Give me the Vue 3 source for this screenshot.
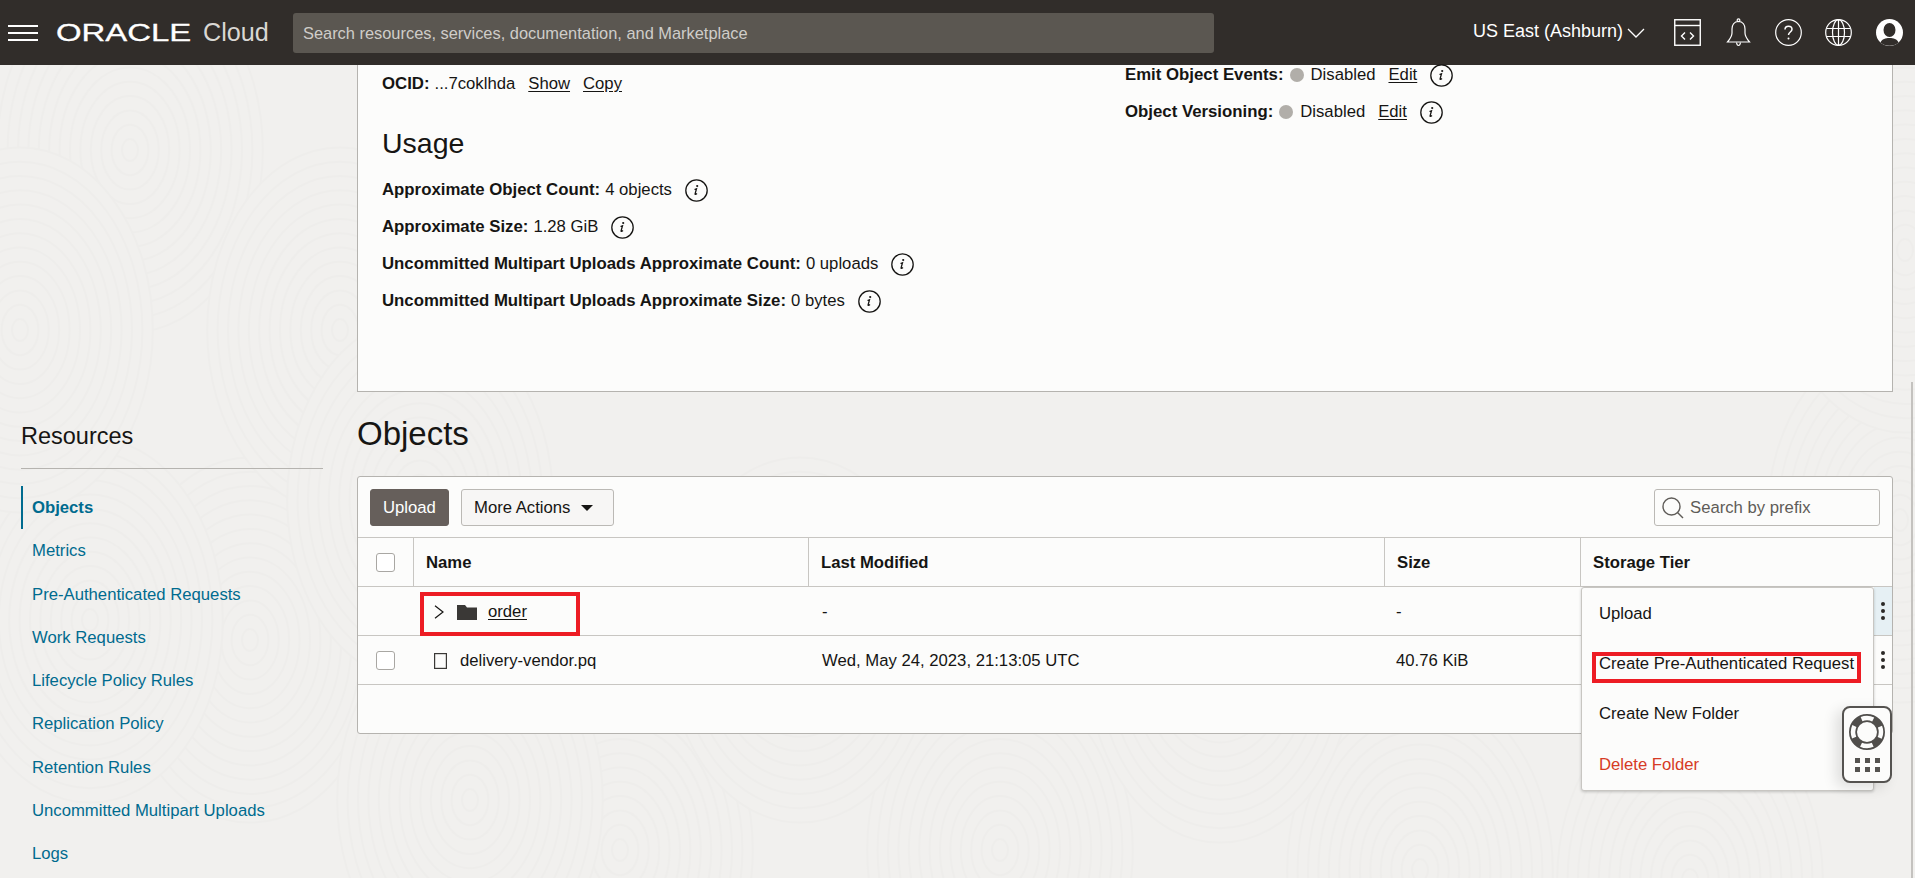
<script setup>
const navItems = [
  "Objects",
  "Metrics",
  "Pre-Authenticated Requests",
  "Work Requests",
  "Lifecycle Policy Rules",
  "Replication Policy",
  "Retention Rules",
  "Uncommitted Multipart Uploads",
  "Logs",
];

const usage = [
  { label: "Approximate Object Count:", value: "4 objects" },
  { label: "Approximate Size:", value: "1.28 GiB" },
  { label: "Uncommitted Multipart Uploads Approximate Count:", value: "0 uploads" },
  { label: "Uncommitted Multipart Uploads Approximate Size:", value: "0 bytes" },
];

const menuItems = [
  { text: "Upload" },
  { text: "Create Pre-Authenticated Request" },
  { text: "Create New Folder" },
  { text: "Delete Folder", danger: true },
];

// faint swirl pattern of the page background
const swirlCenters = [
  [130, 150], [250, 640], [90, 620], [20, 330], [340, 330],
  [620, 850], [1000, 850], [1420, 870], [800, 640], [1220, 660],
  [1690, 880], [1900, 520], [470, 800], [1905, 250], [420, 500],
];
const swirls = swirlCenters.map(([cx, cy]) => ({
  cx,
  cy,
  radii: Array.from({ length: 13 }, (_, i) => 10 + i * 13),
}));
</script>

<template>
  <div class="page">
    <svg class="texture" width="1915" height="813" viewBox="0 65 1915 813">
      <g v-for="(s, i) in swirls" :key="i" fill="#f1f0ee" stroke="#eeedeb" stroke-width="2">
        <ellipse
          v-for="r in [...s.radii].reverse()"
          :key="r"
          :cx="s.cx"
          :cy="s.cy"
          :rx="r * 0.8"
          :ry="r * 1.1"
        />
      </g>
    </svg>

    <header class="topbar">
      <button class="burger" type="button" aria-label="Menu"><i></i><i></i><i></i></button>
      <div class="brand">
        <span class="wordmark">ORACLE</span>
        <span class="cloud">Cloud</span>
      </div>
      <div class="global-search">Search resources, services, documentation, and Marketplace</div>
      <div class="top-right">
        <span class="region">US East (Ashburn)</span>
        <svg class="region-caret" width="18" height="10" viewBox="0 0 18 10">
          <path d="M1 1l8 8 8-8" fill="none" stroke="#fff" stroke-width="1.3" />
        </svg>
        <svg class="ico-code" width="27" height="27" viewBox="0 0 27 27" fill="none" stroke="#fff">
          <rect x=".75" y=".75" width="25.5" height="25.5" stroke-width="1.4" />
          <path d="M1 6.5h25" stroke-width="1.4" />
          <path d="M11 13.5l-3.5 3.5 3.5 3.5M16 13.5l3.5 3.5-3.5 3.5" stroke-width="1.4" />
        </svg>
        <svg class="ico-bell" width="25" height="29" viewBox="0 0 25 29" fill="none" stroke="#fff" stroke-width="1.2">
          <path d="M12.500 3.500c-4.500 0-6.500 3.500-6.500 7.500v4c0 3.500-2 6-4.500 9h22c-2.500-3-4.500-5.500-4.500-9v-4c0-4-2-7.500-6.500-7.500z" />
          <circle cx="12.500" cy="2.300" r="1.400" />
          <path d="M10.500 24.500c.3 2 1 3 2 3s1.700-1 2-3" />
        </svg>
        <svg class="ico-help" width="27" height="27" viewBox="0 0 27 27" fill="none" stroke="#fff" stroke-width="1.2">
          <circle cx="13.500" cy="13.500" r="12.800" />
          <path d="M10 10.500c0-2 1.500-3.300 3.500-3.300s3.500 1.300 3.500 3.100c0 2.700-3.500 2.700-3.500 5.700" stroke-width="1.500" />
          <circle cx="13.500" cy="19.500" r="1" fill="#fff" stroke="none" />
        </svg>
        <svg class="ico-globe" width="27" height="27" viewBox="0 0 27 27" fill="none" stroke="#fff" stroke-width="1.2">
          <circle cx="13.500" cy="13.500" r="12.800" />
          <ellipse cx="13.500" cy="13.500" rx="6" ry="12.800" />
          <path d="M13.500 .7v25.600M1.500 9.500h24M1.500 17.500h24" />
        </svg>
        <svg class="ico-user" width="27" height="27" viewBox="0 0 27 27">
          <circle cx="13.500" cy="13.500" r="13.500" fill="#fff" />
          <ellipse cx="13.500" cy="11" rx="6" ry="7" fill="#312d2a" />
          <path d="M4.500 23.500c1.500-3.500 5-4.500 9-4.500s7.500 1 9 4.500c-2.500 2.200-5.500 3.300-9 3.300s-6.500-1.100-9-3.300z" fill="#312d2a" />
        </svg>
      </div>
    </header>

    <div class="body">
      <aside class="sidebar">
        <h2 class="res-title">Resources</h2>
        <nav class="res-nav">
          <a
            v-for="(item, i) in navItems"
            :key="item"
            class="res-link"
            :class="{ active: i === 0 }"
          >{{ item }}</a>
        </nav>
      </aside>

      <main class="content">
        <section class="details">
          <div class="details-left">
            <p class="line ocid">
              <b>OCID:</b> ...7coklhda
              <a class="lnk first">Show</a>
              <a class="lnk">Copy</a>
            </p>
            <h2 class="usage-title">Usage</h2>
            <p v-for="u in usage" :key="u.label" class="line usage-line">
              <b>{{ u.label }}</b> {{ u.value }}
              <svg class="info" width="23" height="23" viewBox="0 0 23 23">
                <circle cx="11.500" cy="11.500" r="10.700" fill="none" stroke="#161513" stroke-width="1.300" />
                <path d="M9.500 10.500l2-.7-1.400 5c-.2.800.5 1 1.900-.2" fill="none" stroke="#161513" stroke-width="1.300" />
                <circle cx="12.200" cy="7" r="1.100" fill="#161513" />
              </svg>
            </p>
          </div>
          <div class="details-right">
            <p class="line">
              <b>Emit Object Events:</b>
              <span class="dot"></span>Disabled
              <a class="lnk first">Edit</a>
              <svg class="info" width="23" height="23" viewBox="0 0 23 23">
                <circle cx="11.500" cy="11.500" r="10.700" fill="none" stroke="#161513" stroke-width="1.300" />
                <path d="M9.500 10.500l2-.7-1.400 5c-.2.800.5 1 1.900-.2" fill="none" stroke="#161513" stroke-width="1.300" />
                <circle cx="12.200" cy="7" r="1.100" fill="#161513" />
              </svg>
            </p>
            <p class="line versioning">
              <b>Object Versioning:</b>
              <span class="dot"></span>Disabled
              <a class="lnk first">Edit</a>
              <svg class="info" width="23" height="23" viewBox="0 0 23 23">
                <circle cx="11.500" cy="11.500" r="10.700" fill="none" stroke="#161513" stroke-width="1.300" />
                <path d="M9.500 10.500l2-.7-1.400 5c-.2.800.5 1 1.900-.2" fill="none" stroke="#161513" stroke-width="1.300" />
                <circle cx="12.200" cy="7" r="1.100" fill="#161513" />
              </svg>
            </p>
          </div>
        </section>

        <h1 class="objects-title">Objects</h1>

        <section class="objects">
          <div class="toolbar">
            <button class="btn primary" type="button">Upload</button>
            <button class="btn more" type="button">More Actions <span class="caret"></span></button>
            <div class="prefix">
              <svg width="22" height="22" viewBox="0 0 22 22" fill="none" stroke="#5f5c58" stroke-width="1.400">
                <circle cx="9.500" cy="9.500" r="8.500" />
                <path d="M15.500 15.500l5.500 5.500" />
              </svg>
              <span>Search by prefix</span>
            </div>
          </div>

          <div class="row head">
            <div class="cell check"><span class="box"></span></div>
            <div class="cell ruled">Name</div>
            <div class="cell ruled">Last Modified</div>
            <div class="cell ruled">Size</div>
            <div class="cell ruled">Storage Tier</div>
          </div>

          <div class="row">
            <div class="cell check"></div>
            <div class="cell name">
              <svg class="chev" width="10" height="14" viewBox="0 0 10 14">
                <path d="M1 .7L9 7l-8 6.300" fill="none" stroke="#161513" stroke-width="1.200" />
              </svg>
              <svg class="folder" width="20" height="15" viewBox="0 0 20 15">
                <path d="M0 0h8l2 2.500h10V15H0z" fill="#3a3836" />
              </svg>
              <a class="lnk">order</a>
            </div>
            <div class="cell">-</div>
            <div class="cell">-</div>
            <div class="cell"></div>
            <div class="kebab hovered"><i></i><i></i><i></i></div>
          </div>

          <div class="row">
            <div class="cell check"><span class="box"></span></div>
            <div class="cell name">
              <svg class="file" width="13" height="16" viewBox="0 0 13 16">
                <rect x=".6" y=".6" width="11.800" height="14.800" fill="none" stroke="#3a3836" stroke-width="1.200" />
              </svg>
              <span>delivery-vendor.pq</span>
            </div>
            <div class="cell">Wed, May 24, 2023, 21:13:05 UTC</div>
            <div class="cell">40.76 KiB</div>
            <div class="cell"></div>
            <div class="kebab"><i></i><i></i><i></i></div>
          </div>

          <div class="row-empty"></div>

          <span class="mark mark-order"></span>
          <ul class="menu">
            <li v-for="m in menuItems" :key="m.text" :class="{ danger: m.danger }">{{ m.text }}</li>
          </ul>
          <span class="mark mark-par"></span>
          <div class="help-widget">
            <svg width="38" height="38" viewBox="0 0 38 38">
              <circle cx="19" cy="19" r="14" fill="none" stroke="#504e4b" stroke-width="8" />
              <circle cx="19" cy="19" r="14" fill="none" stroke="#fcfcfb" stroke-width="4.500" stroke-dasharray="12 9.990" stroke-dashoffset="6" />
            </svg>
            <div class="apps"><i v-for="n in 6" :key="n"></i></div>
          </div>
        </section>
      </main>
    </div>
    <span class="scroll-thumb"></span>
  </div>
</template>

<style scoped>
.page {
  position: relative;
  height: 878px;
  background: #f1f0ee;
  overflow: hidden;
  font-family: "Liberation Sans", Arial, sans-serif;
  font-size: 16.7px;
  color: #161513;
}
.texture {
  position: absolute;
  left: 0;
  top: 65px;
}
.topbar {
  position: relative;
  height: 65px;
  background: #312d2a;
  display: flex;
  align-items: center;
  color: #fff;
}
.burger {
  margin-left: 8px;
  width: 30px;
  height: 16px;
  padding: 0;
  border: 0;
  background: none;
  display: flex;
  flex-direction: column;
  justify-content: space-between;
}
.burger i {
  display: block;
  height: 2px;
  background: #fff;
}
.brand {
  margin-left: 18px;
  width: 237px;
  display: flex;
  align-items: center;
}
.wordmark {
  display: block;
  width: 137px;
  font-size: 24px;
  line-height: 24px;
  color: #fff;
  transform: scaleX(1.37);
  transform-origin: left center;
  -webkit-text-stroke: 0.3px #fff;
  white-space: nowrap;
}
.cloud {
  margin-left: 10px;
  font-size: 25.200px;
  color: #d9d7d4;
}
.global-search {
  width: 921px;
  height: 40px;
  padding-left: 10px;
  box-sizing: border-box;
  border-radius: 3px;
  background: #5b5751;
  color: #cfcdc9;
  font-size: 16.400px;
  line-height: 40px;
}
.top-right {
  flex: 1;
  display: flex;
  align-items: center;
  position: relative;
}
.region {
  margin-left: 259px;
  font-size: 18px;
  margin-top: -2px;
}
.region-caret {
  margin-left: 4px;
}
.ico-code {
  margin-left: 29px;
}
.ico-bell {
  margin-left: 25px;
}
.ico-help {
  margin-left: 24px;
}
.ico-globe {
  margin-left: 23px;
}
.ico-user {
  margin-left: 24px;
}
.body {
  position: relative;
  display: grid;
  grid-template-columns: 357px 1536px;
}
.sidebar {
  padding: 355px 0 0 21px;
}
.res-title {
  margin: 0;
  width: 302px;
  height: 49px;
  box-sizing: border-box;
  padding-top: 1px;
  border-bottom: 1px solid #b5b3af;
  font-size: 23.500px;
  line-height: 30px;
  font-weight: 400;
}
.res-nav {
  display: flex;
  flex-direction: column;
  margin-top: 17px;
}
.res-link {
  height: 43.250px;
  line-height: 44px;
  padding-left: 9px;
  color: #006b8f;
  border-left: 2px solid transparent;
}
.res-link.active {
  font-weight: 700;
  border-left-color: #006b8f;
}
.content {
  min-width: 0;
}
.details {
  height: 327px;
  box-sizing: border-box;
  background: #fcfcfb;
  border: 1px solid #b5b3af;
  border-top: 0;
  display: grid;
  grid-template-columns: 743px 1fr;
  padding-left: 24px;
}
.line {
  margin: 0;
  height: 20px;
  line-height: 20px;
  white-space: nowrap;
  display: flex;
  align-items: center;
}
.line b {
  margin-right: 5px;
  font-size: 16.800px;
}
.ocid {
  margin-top: 9px;
}
.lnk {
  text-decoration: underline;
  text-underline-offset: 2px;
  color: #161513;
}
.line .lnk {
  margin-left: 13px;
}
.usage-title {
  margin: 29px 0 0;
  height: 40px;
  line-height: 41px;
  font-size: 28.500px;
  font-weight: 400;
}
.usage-line {
  margin-top: 17px;
}
.info {
  margin-left: 13px;
  flex: none;
}
.versioning {
  margin-top: 17px;
}
.dot {
  width: 14px;
  height: 14px;
  border-radius: 50%;
  background: #b1aea9;
  margin-right: 7px;
  margin-left: 1px;
}
.objects-title {
  margin: 0;
  height: 84px;
  line-height: 84px;
  font-size: 33px;
  font-weight: 400;
}
.objects {
  position: relative;
  height: 258px;
  box-sizing: border-box;
  background: #fcfcfb;
  border: 1px solid #b5b3af;
  border-radius: 3px;
}
.toolbar {
  height: 60px;
  box-sizing: border-box;
  padding: 12px 12px 0 12px;
  display: flex;
  align-items: flex-start;
  gap: 12px;
}
.btn {
  height: 37px;
  padding: 0 0 0 12px;
  border: 1px solid #bbb9b5;
  border-radius: 3px;
  background: #f7f6f5;
  font: inherit;
  color: #161513;
  display: flex;
  align-items: center;
}
.btn.primary {
  width: 79px;
  background: #665f5b;
  border-color: #665f5b;
  color: #fff;
}
.btn.more {
  width: 153px;
}
.caret {
  margin-left: 11px;
  width: 0;
  height: 0;
  border-left: 6px solid transparent;
  border-right: 6px solid transparent;
  border-top: 6px solid #161513;
}
.prefix {
  margin-left: auto;
  width: 226px;
  height: 37px;
  box-sizing: border-box;
  padding-left: 7px;
  border: 1px solid #bbb9b5;
  border-radius: 3px;
  display: flex;
  align-items: center;
  gap: 6px;
  color: #5f5c58;
}
.row {
  position: relative;
  display: grid;
  grid-template-columns: 55px 395px 576px 196px 1fr;
  height: 49px;
  border-top: 1px solid #c8c6c2;
  box-sizing: border-box;
  align-items: stretch;
}
.row-empty {
  height: 48px;
  border-top: 1px solid #c8c6c2;
}
.cell {
  display: flex;
  align-items: center;
  padding: 2px 0 0 12px;
  white-space: nowrap;
}
.cell:nth-child(3) {
  padding-left: 14px;
}
.head {
  font-weight: 700;
}
.head .ruled {
  border-left: 1px solid #c8c6c2;
}
.head .cell:nth-child(3) {
  padding-left: 12px;
}
.check {
  padding: 0 0 0 18px;
}
.box {
  width: 19px;
  height: 19px;
  box-sizing: border-box;
  border: 1px solid #a9a7a3;
  border-radius: 3px;
  background: #fff;
}
.name {
  padding-left: 21px;
}
.chev {
  flex: none;
}
.folder {
  margin-left: 13px;
}
.folder + .lnk {
  margin-left: 11px;
}
.file + span {
  margin-left: 13px;
}
.kebab {
  position: absolute;
  right: 0;
  top: 0;
  width: 18px;
  height: 48px;
  display: flex;
  flex-direction: column;
  align-items: center;
  justify-content: center;
  gap: 3px;
}
.kebab.hovered {
  background: #e6f0f4;
}
.kebab i {
  width: 4px;
  height: 4px;
  border-radius: 50%;
  background: #2b2926;
}
.menu {
  position: absolute;
  left: 1223px;
  top: 110px;
  width: 293px;
  height: 204px;
  box-sizing: border-box;
  margin: 0;
  padding: 0;
  list-style: none;
  background: #fcfcfb;
  border: 1px solid #c8c6c2;
  border-radius: 3px;
  box-shadow: 0 1px 3px rgba(0, 0, 0, 0.2);
}
.menu li {
  height: 50.200px;
  line-height: 52px;
  padding-left: 17px;
}
.menu li.danger {
  color: #d63b25;
}
.mark {
  position: absolute;
  box-sizing: border-box;
  border: 4px solid #ed1c24;
  z-index: 2;
}
.mark-order {
  left: 62px;
  top: 115px;
  width: 160px;
  height: 44px;
}
.mark-par {
  left: 1234px;
  top: 175px;
  width: 269px;
  height: 31px;
}
.help-widget {
  position: absolute;
  left: 1484px;
  top: 229px;
  width: 50px;
  height: 77px;
  box-sizing: border-box;
  background: #fcfcfb;
  border: 2px solid #555350;
  border-radius: 8px;
  box-shadow: -6px 4px 14px rgba(0, 0, 0, 0.12);
  display: flex;
  flex-direction: column;
  align-items: center;
  padding-top: 5px;
  z-index: 3;
}
.apps {
  margin-top: 7px;
  display: grid;
  grid-template-columns: repeat(3, 5px);
  gap: 4px 5px;
}
.apps i {
  width: 5px;
  height: 5px;
  background: #555350;
}
.scroll-thumb {
  position: absolute;
  left: 1911px;
  top: 382px;
  width: 2px;
  bottom: 0;
  background: #c4c2bf;
}
</style>

<style>
html,
body {
  margin: 0;
  background: #fff;
  overflow: hidden;
}
</style>
